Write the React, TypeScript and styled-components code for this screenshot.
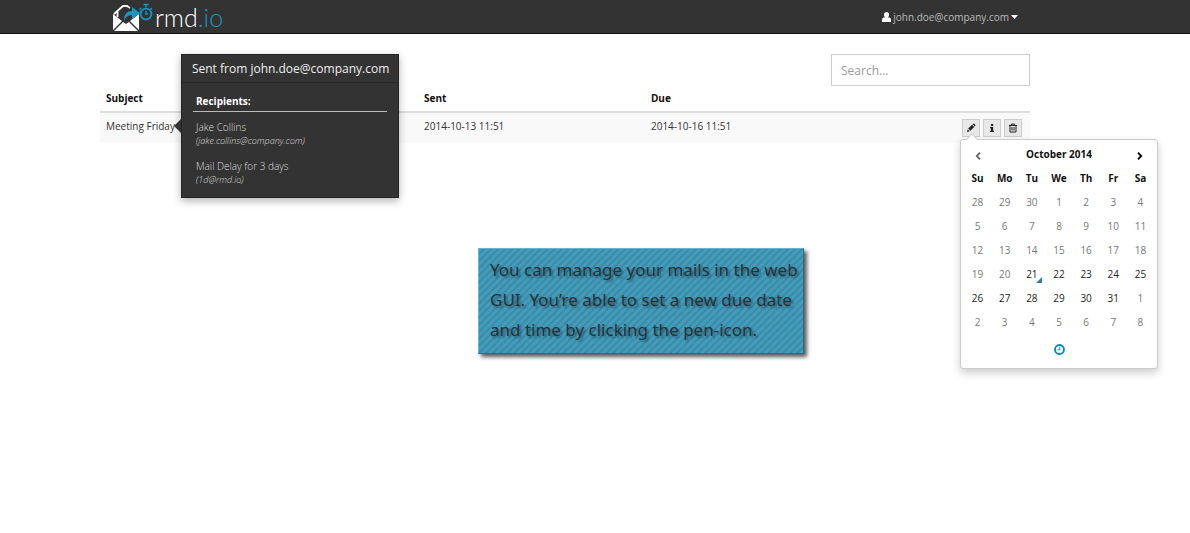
import React from 'react';
import styled, { createGlobalStyle, css } from 'styled-components';

const GlobalStyle = createGlobalStyle`
  *, *::before, *::after { box-sizing: border-box; }
  body {
    margin: 0;
    background: #fff;
    color: #333;
    font: 10px/14px "Open Sans", "Noto Sans", sans-serif;
  }
  button, input { font: inherit; color: inherit; }
`;

const Page = styled.div`
  min-height: 100vh;
`;

const Header = styled.header`
  display: flex;
  align-items: center;
  justify-content: space-between;
  height: 34px;
  padding: 0 172px 0 113px;
  background: #333;
  border-bottom: 1px solid #111;
`;

const Brand = styled.a`
  display: flex;
  align-items: center;
  gap: 2px;
  color: #fff;
  font: 300 25px/34px Lato, "Open Sans", sans-serif;
  text-decoration: none;

  svg { display: block; }
  span span { color: #1796c4; }
`;

const UserButton = styled.button`
  display: flex;
  align-items: center;
  gap: 2px;
  padding: 0;
  border: 0;
  background: none;
  color: #bbb;
`;

const Main = styled.main`
  padding: 20px 160px 0 100px;
`;

const Search = styled.input`
  display: block;
  width: 199px;
  height: 32px;
  margin-left: auto;
  padding: 0 9px;
  border: 1px solid #ccc;
  background: #fff;
  font-size: 12px;

  &::placeholder { color: #999; opacity: 1; }
`;

const MailTable = styled.table`
  width: 100%;
  border-collapse: separate;
  border-spacing: 0;
  table-layout: fixed;

  th, td { padding: 0 6px 2px; text-align: left; }
  th { height: 27px; border-bottom: 2px solid #ddd; color: #111; }
  td { height: 30px; padding-bottom: 4px; background: #f9f9f9; }
  td:last-child { padding-bottom: 0; }
`;

const Column = styled.col<{ $share?: string }>`
  width: ${({ $share }) => $share ?? 'auto'};
`;

const Subject = styled.div`
  position: relative;
  width: max-content;
`;

const Popover = styled.aside`
  position: absolute;
  z-index: 2;
  top: -65px;
  left: calc(100% + 6px);
  width: 218px;
  height: 144px;
  border: 1px solid #222;
  background: #333;
  box-shadow: 0 3px 8px rgba(0, 0, 0, 0.3);
  color: #ccc;

  &::before {
    content: "";
    position: absolute;
    top: 64px;
    left: -8px;
    border: solid transparent;
    border-width: 7px 7px 7px 0;
    border-right-color: #333;
  }
`;

const PopoverTitle = styled.h2`
  margin: 0;
  padding: 5px 10px 4px;
  border-bottom: 1px solid #272727;
  color: #eee;
  font-size: 12px;
  font-weight: 400;
  line-height: 18px;
  white-space: nowrap;
`;

const Recipients = styled.section`
  padding: 11px;

  h3 {
    margin: 0 0 8px;
    padding: 0 3px 3px;
    border-bottom: 1px solid #bbb;
    color: #fff;
    font-size: 10px;
  }
`;

const Recipient = styled.p`
  margin: 0 0 11px;
  padding: 0 3px;
  color: #ddd;
  font-weight: 300;

  em { display: block; font-size: 9px; }
`;

const Actions = styled.div`
  position: relative;
  display: flex;
  justify-content: flex-end;
  gap: 3px;
  padding: 0 2px;
`;

const ActionButton = styled.button`
  display: grid;
  place-items: center;
  width: 18px;
  height: 18px;
  padding: 0;
  border: 1px solid #ccc;
  background: #e8e8e8;
  color: #222;
`;

const Picker = styled.section`
  position: absolute;
  z-index: 3;
  top: 20px;
  right: -134px;
  width: 198px;
  height: 230px;
  padding: 2px 3px;
  border: 1px solid #ccc;
  border-radius: 3px;
  background: #fff;
  box-shadow: 0 4px 9px rgba(0, 0, 0, 0.2);

  &::before {
    content: "";
    position: absolute;
    top: -5px;
    left: 7px;
    width: 8px;
    height: 8px;
    border: solid #ccc;
    border-width: 1px 0 0 1px;
    background: #fff;
    transform: rotate(45deg);
  }
`;

const Calendar = styled.table`
  width: 100%;
  border-collapse: collapse;
  table-layout: fixed;

  && th, && td { height: 24px; padding: 0; background: none; border: 0; text-align: center; }
`;

const PickerButton = styled.button<{ $muted?: boolean }>`
  display: grid;
  place-items: center;
  width: 100%;
  height: 24px;
  padding: 3px 0 0;
  border: 0;
  background: none;
  color: ${({ $muted }) => ($muted ? '#666' : '#000')};
`;

const Day = styled.button<{ $muted: boolean; $today: boolean }>`
  position: relative;
  display: block;
  width: 100%;
  height: 24px;
  padding: 0;
  border: 0;
  background: none;
  color: ${({ $muted }) => ($muted ? '#777' : '#222')};

  ${({ $today }) => $today && css`
    &::after {
      content: "";
      position: absolute;
      right: 3px;
      bottom: 3px;
      border: solid transparent;
      border-width: 0 0 6px 6px;
      border-bottom-color: #337ab7;
    }
  `}
`;

const TimeButton = styled(PickerButton)`
  height: 30px;
  padding: 0;
  color: #0088bb;
`;

const Callout = styled.p`
  width: max-content;
  margin: 105px 0 0 378px;
  padding: 6px 5px 8px 11px;
  border: 1px solid;
  border-color: #65b4cf #2b6b83 #2b6b83 #65b4cf;
  background: repeating-linear-gradient(135deg, #3f9dbe 0 2px, #4289a3 3px 4px, #3f9dbe 5px);
  box-shadow: 3px 3px 4px rgba(0, 0, 0, 0.65);
  color: #263238;
  font: 17px/30px "Noto Sans", "Open Sans", sans-serif;
  text-shadow: 2px 2px 2px rgba(0, 0, 0, 0.35);
`;

const LogoMark = () => (
  <svg width="40" height="30" viewBox="0 0 40 30" aria-hidden="true">
    <path d="M1 12 L10 4 H14 L17 6 M4.5 15 V9 M22 14 V11 M23 10 L25 12" fill="none" stroke="#fff" strokeWidth="1.8" />
    <path d="M0 12 L9 19 L0 28Z M26 12 L17 19 L26 28Z M1 29 L10 20 L13 22 L16 20 L25 29Z" fill="#fff" />
    <path d="M11 19 C11 12 14 9 19 9 V5 L27 11 L19 17 V13 C15 13 13 15 11 19Z" fill="#1796c4" />
    <circle cx="33" cy="12" r="5.4" fill="none" stroke="#1796c4" strokeWidth="1.8" />
    <path d="M33 5.5 V3 M30.5 2.5 H35.5 M28 6 L26.5 7.5 M37.5 6 L39 7.5 M33 9 V12 H35" fill="none" stroke="#1796c4" strokeWidth="1.5" />
  </svg>
);

const UserIcon = () => (
  <svg width="9" height="10" viewBox="0 0 9 10" fill="#fff" aria-hidden="true">
    <path d="M4.5 0C6 0 7 1 7 2.7C7 4 6.4 5 5.8 5.4L7.4 5.6Q9 6 9 7.8V10H0V7.8Q0 6 1.6 5.6L3.2 5.4C2.6 5 2 4 2 2.7C2 1 3 0 4.5 0Z" />
  </svg>
);

const CaretIcon = () => (
  <svg width="7" height="4" viewBox="0 0 7 4" fill="#fff" aria-hidden="true"><path d="M0 0H7L3.5 4Z" /></svg>
);

const PencilIcon = () => (
  <svg width="10" height="10" viewBox="0 0 10 10" fill="currentColor" aria-hidden="true">
    <path d="M1 9L1.7 6.2L3.8 8.3ZM2.2 5.6L6 1.8L8.2 4L4.4 7.8ZM6.6 1.2L7.2.7Q7.8.3 8.3.8L9.2 1.7Q9.7 2.2 9.2 2.8L8.7 3.4Z" />
  </svg>
);

const InfoIcon = () => (
  <svg width="8" height="10" viewBox="0 0 8 10" fill="currentColor" aria-hidden="true">
    <path d="M3 1H5.2V3H3ZM2 4H5.2V7.7H6V9H2V7.7H2.9V5.2H2Z" />
  </svg>
);

const TrashIcon = () => (
  <svg width="10" height="10" viewBox="0 0 10 10" fill="none" stroke="currentColor" aria-hidden="true">
    <path d="M1 2.5H9M3.5 2.5V1H6.5V2.5M2 2.5V9H8V2.5M4 4V7.5M6 4V7.5" />
  </svg>
);

const Chevron = ({ next = false }: { next?: boolean }) => (
  <svg width="6" height="8" viewBox="0 0 6 8" fill="none" stroke="currentColor" strokeWidth="1.8" aria-hidden="true">
    <path d={next ? 'M1 .7L4.2 4L1 7.3' : 'M5 .7L1.8 4L5 7.3'} />
  </svg>
);

const ClockIcon = () => (
  <svg width="11" height="11" viewBox="0 0 11 11" fill="none" stroke="currentColor" aria-hidden="true">
    <circle cx="5.5" cy="5.5" r="4.5" strokeWidth="1.8" />
    <path d="M5.8 2.8V5.8H3.5" />
  </svg>
);

const weekdays = ['Su', 'Mo', 'Tu', 'We', 'Th', 'Fr', 'Sa'];
const weeks = [
  [28, 29, 30, 1, 2, 3, 4],
  [5, 6, 7, 8, 9, 10, 11],
  [12, 13, 14, 15, 16, 17, 18],
  [19, 20, 21, 22, 23, 24, 25],
  [26, 27, 28, 29, 30, 31, 1],
  [2, 3, 4, 5, 6, 7, 8],
];

const DatePicker = () => (
  <Picker aria-label="Due date">
    <Calendar>
      <thead>
        <tr>
          <th><PickerButton $muted aria-label="Previous month"><Chevron /></PickerButton></th>
          <th colSpan={5}>October 2014</th>
          <th><PickerButton aria-label="Next month"><Chevron next /></PickerButton></th>
        </tr>
        <tr>{weekdays.map((name) => <th key={name} scope="col">{name}</th>)}</tr>
      </thead>
      <tbody>
        {weeks.map((days, week) => (
          <tr key={week}>
            {days.map((day) => {
              const selectable = (week === 3 && day > 20) || (week === 4 && day > 1);
              return (
                <td key={day}>
                  <Day $muted={!selectable} $today={week === 3 && day === 21}>{day}</Day>
                </td>
              );
            })}
          </tr>
        ))}
      </tbody>
    </Calendar>
    <TimeButton aria-label="Select time"><ClockIcon /></TimeButton>
  </Picker>
);

export default function App() {
  return (
    <Page>
      <GlobalStyle />
      <Header>
        <Brand href="#" aria-label="rmd.io">
          <LogoMark />
          <span>rmd<span>.io</span></span>
        </Brand>
        <UserButton><UserIcon />john.doe@company.com<CaretIcon /></UserButton>
      </Header>
      <Main>
        <Search type="search" placeholder="Search..." aria-label="Search" />
        <MailTable>
          <colgroup>
            <Column $share="34.2%" />
            <Column $share="24.4%" />
            <Column />
            <Column $share="10%" />
          </colgroup>
          <thead>
            <tr>
              <th scope="col">Subject</th>
              <th scope="col">Sent</th>
              <th scope="col">Due</th>
              <th aria-label="Actions" />
            </tr>
          </thead>
          <tbody>
            <tr>
              <td>
                <Subject>
                  Meeting Friday
                  <Popover>
                    <PopoverTitle>Sent from john.doe@company.com</PopoverTitle>
                    <Recipients>
                      <h3>Recipients:</h3>
                      <Recipient>Jake Collins<em>(jake.collins@company.com)</em></Recipient>
                      <Recipient>Mail Delay for 3 days<em>(1d@rmd.io)</em></Recipient>
                    </Recipients>
                  </Popover>
                </Subject>
              </td>
              <td>2014-10-13 11:51</td>
              <td>2014-10-16 11:51</td>
              <td>
                <Actions>
                  <ActionButton aria-label="Edit due date"><PencilIcon /></ActionButton>
                  <ActionButton aria-label="Details"><InfoIcon /></ActionButton>
                  <ActionButton aria-label="Delete"><TrashIcon /></ActionButton>
                  <DatePicker />
                </Actions>
              </td>
            </tr>
          </tbody>
        </MailTable>
        <Callout>
          You can manage your mails in the web<br />
          GUI. You’re able to set a new due date<br />
          and time by clicking the pen-icon.
        </Callout>
      </Main>
    </Page>
  );
}
